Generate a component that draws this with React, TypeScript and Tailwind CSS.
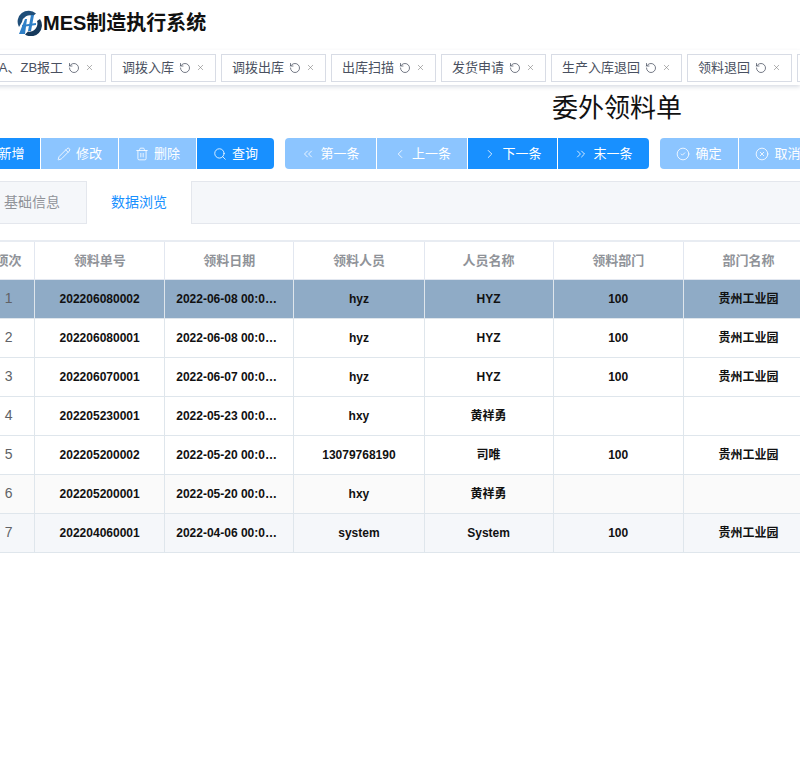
import React from "react"
import {
  RotateCcw, X, Pencil, Trash2, Search, Plus, ChevronsLeft, ChevronLeft, ChevronRight, ChevronsRight, CircleCheck, CircleX,
} from "lucide-react"

const font = "[font-family:'Liberation_Sans','Noto_Sans_CJK_SC',sans-serif]"

const tabs = [
  { name: "TA、ZB报工", w: "w-[126px]" },
  { name: "调拨入库", w: "w-[105px]" },
  { name: "调拨出库", w: "w-[105px]" },
  { name: "出库扫描", w: "w-[105px]" },
  { name: "发货申请", w: "w-[105px]" },
  { name: "生产入库退回", w: "w-[131px]" },
  { name: "领料退回", w: "w-[105px]" },
  { name: "委外领料", w: "w-[105px]" },
]

const rows = [
  ["1", "202206080002", "2022-06-08 00:00:00", "hyz", "HYZ", "100", "贵州工业园"],
  ["2", "202206080001", "2022-06-08 00:00:00", "hyz", "HYZ", "100", "贵州工业园"],
  ["3", "202206070001", "2022-06-07 00:00:00", "hyz", "HYZ", "100", "贵州工业园"],
  ["4", "202205230001", "2022-05-23 00:00:00", "hxy", "黄祥勇", "", ""],
  ["5", "202205200002", "2022-05-20 00:00:00", "13079768190", "司唯", "100", "贵州工业园"],
  ["6", "202205200001", "2022-05-20 00:00:00", "hxy", "黄祥勇", "", ""],
  ["7", "202204060001", "2022-04-06 00:00:00", "system", "System", "100", "贵州工业园"],
]

const heads = ["领料单号", "领料日期", "领料人员", "人员名称", "领料部门", "部门名称"]

function Logo() {
  return (
    <svg width="26" height="26" viewBox="0 0 26 26" className="shrink-0">
      <path d="M3 17 A11 11 0 0 1 20 3.5 L17 6 A8 8 0 0 0 6 12 Z" fill="#1f4e79" />
      <path d="M24 9 A11 11 0 0 1 9 24.5 L12 21.5 A8 8 0 0 0 21 11 Z" fill="#16395c" />
      <path d="M3 24 L9 9 L11 9 L9 24 Z" fill="#2f80c8" />
      <path d="M15 5 L18 5 L15 21 L12 21 Z" fill="#2f80c8" />
      <path d="M6 15 L20 13 L20 15 L6 17 Z" fill="#2f80c8" />
    </svg>
  )
}

function Btn({ icon: Icon, label, w, dark, round }: { icon: any; label: string; w: string; dark?: boolean; round?: string }) {
  return (
    <button className={`${w} ${round ?? ""} h-[31px] shrink-0 flex items-center justify-center gap-[5px] text-[13px] text-white ${dark ? "bg-[#1890ff]" : "bg-[#8cc5ff]"}`}>
      <Icon size={14} strokeWidth={1.4} />
      <span>{label}</span>
    </button>
  )
}

export default function App() {
  return (
    <div className={`${font} w-[800px] h-[766px] overflow-hidden bg-white`}>
      <div className="h-[50px] flex items-start pl-4 pt-[10px] gap-[1px]">
        <Logo />
        <span className="text-[20px] leading-[26px] font-bold text-[#111]">MES制造执行系统</span>
      </div>

      <div className="h-[35px] bg-white shadow-[0_2px_4px_rgba(50,70,110,0.18)] flex items-center gap-[5px] -ml-5 overflow-hidden relative">
        {tabs.map((t) => (
          <div key={t.name} className={`${t.w} h-[28px] shrink-0 border border-[#d8dce5] flex items-center justify-center gap-[5px] text-[13px] text-[#495060]`}>
            <span>{t.name}</span>
            <RotateCcw size={12} strokeWidth={1.5} />
            <X size={9} strokeWidth={1.5} className="text-[#777]" />
          </div>
        ))}
      </div>

      <div className="h-[53px] pl-[552px] pt-[5px] text-[26px] leading-[36px] text-[#111] whitespace-nowrap">委外领料单</div>

      <div className="h-[31px] flex -ml-9 gap-[11px]">
        <div className="flex gap-px">
          <Btn icon={Plus} label="新增" w="w-[76px]" dark round="rounded-l" />
          <Btn icon={Pencil} label="修改" w="w-[77px]" />
          <Btn icon={Trash2} label="删除" w="w-[77px]" />
          <Btn icon={Search} label="查询" w="w-[77px]" dark round="rounded-r" />
        </div>
        <div className="flex gap-px">
          <Btn icon={ChevronsLeft} label="第一条" w="w-[91px]" round="rounded-l" />
          <Btn icon={ChevronLeft} label="上一条" w="w-[90px]" />
          <Btn icon={ChevronRight} label="下一条" w="w-[89px]" dark />
          <Btn icon={ChevronsRight} label="末一条" w="w-[91px]" dark round="rounded-r" />
        </div>
        <div className="flex gap-px">
          <Btn icon={CircleCheck} label="确定" w="w-[78px]" round="rounded-l" />
          <Btn icon={CircleX} label="取消" w="w-[78px]" round="rounded-r" />
        </div>
      </div>

      <div className="mt-3 h-[43px] -ml-5 bg-[#f5f7fa] border-y border-[#e4e7ed] flex">
        <div className="w-[107px] flex items-center justify-center border-r border-[#e4e7ed] text-[14px] text-[#909399] pr-[2px]">基础信息</div>
        <div className="w-[105px] -my-px bg-white border-r border-[#e4e7ed] flex items-center justify-center text-[14px] text-[#1890ff]">数据浏览</div>
      </div>

      <div className="mt-4 -ml-[46px] w-[900px]">
        <table className="table-fixed border-collapse border-t-2 border-[#e8ecf2] w-[860px]">
          <colgroup>
            <col className="w-[80px]" />
            <col className="w-[130px]" />
            <col className="w-[129px]" />
            <col className="w-[130px]" />
            <col className="w-[129px]" />
            <col className="w-[130px]" />
            <col className="w-[130px]" />
          </colgroup>
          <thead>
            <tr className="h-[38px]">
              <th className="border border-[#e2e7f0] text-[13px] font-bold text-[#909399] pl-[28px]">项次</th>
              {heads.map((h) => (
                <th key={h} className="border border-[#e2e7f0] text-[13px] font-bold text-[#909399]">{h}</th>
              ))}
            </tr>
          </thead>
          <tbody>
            {rows.map((r, i) => (
              <tr key={r[0]} className={`h-[39px] ${i === 0 ? "bg-[#8fabc6]" : i === 5 ? "bg-[#fafafa]" : i === 6 ? "bg-[#f5f7fa]" : "bg-white"}`}>
                <td className="border border-[#dfe6ec] text-[14px] text-[#606266] text-center pl-[28px]">{r[0]}</td>
                <td className="border border-[#dfe6ec] text-[12px] font-bold text-[#111] text-center">{r[1]}</td>
                <td className="border border-[#dfe6ec] text-[12px] font-bold text-[#111] px-[11px]">
                  <div className="truncate">{r[2]}</div>
                </td>
                {r.slice(3).map((c, j) => (
                  <td key={j} className="border border-[#dfe6ec] text-[12px] font-bold text-[#111] text-center">{c}</td>
                ))}
              </tr>
            ))}
          </tbody>
        </table>
      </div>
    </div>
  )
}
